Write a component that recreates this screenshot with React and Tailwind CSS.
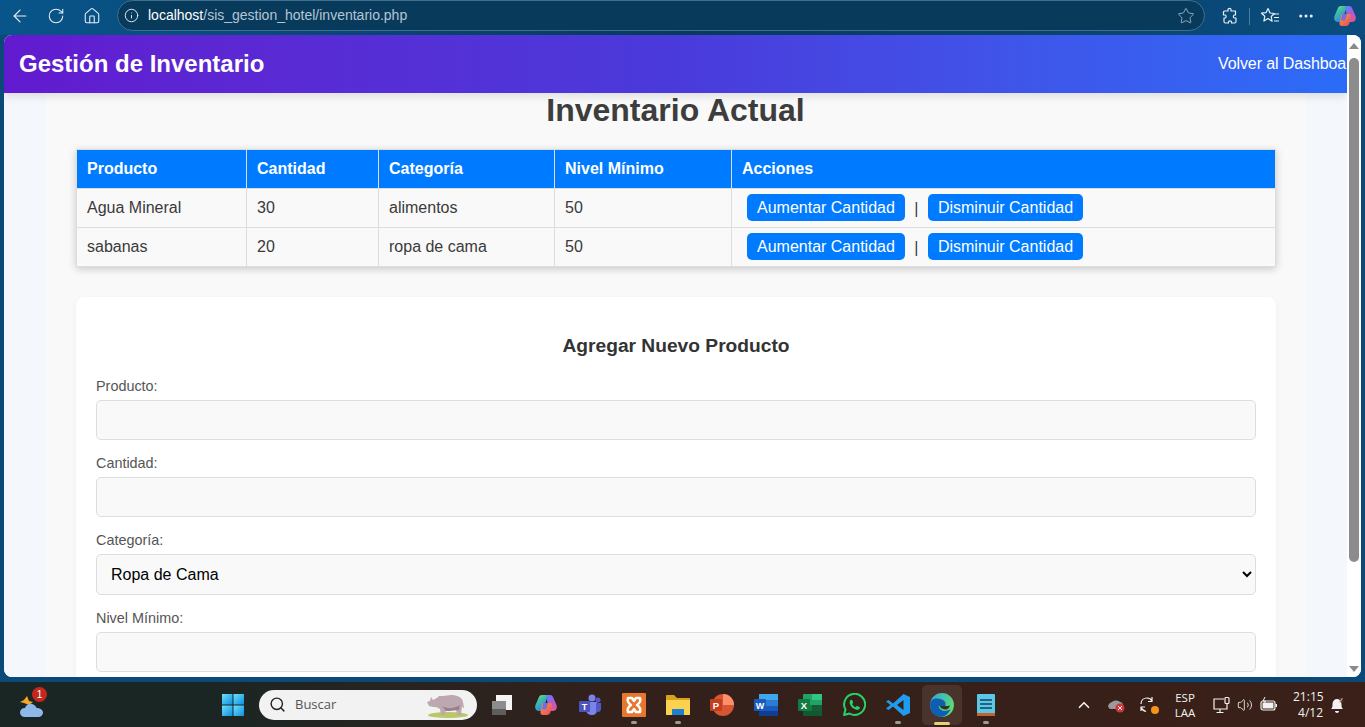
import { ArrowLeft, RotateCw, Home, Info, Star, MoreHorizontal, Search, ChevronUp, Volume2 } from "lucide-react";

const rows = [
  { producto: "Agua Mineral", cantidad: 30, categoria: "alimentos", minimo: 50 },
  { producto: "sabanas", cantidad: 20, categoria: "ropa de cama", minimo: 50 },
];

const thClass = "border border-[#ddd] px-[10px] text-left font-bold text-white h-[39px]";
const tdClass = "border border-[#ddd] px-[10px] h-[39px] text-[#3a3a3a]";
const btnClass = "bg-[#007bff] text-white rounded-[5px] px-[10px] h-[27px] leading-[27px] mx-[5px] inline-block relative top-[-1px]";
const labelClass = "block text-[14.4px] leading-[16px] text-[#555] mb-[6px]";
const inputClass = "block w-full h-[40px] bg-[#f9f9f9] border border-[#ddd] rounded-[5px] px-[10px]";

const CopilotIcon = ({ id = "a", size = 24 }) => (
  <svg width={size} height={size} viewBox="0 0 24 24">
    <defs>
      <linearGradient id={"cop1" + id} x1="0" y1="0" x2="0.6" y2="1">
        <stop offset="0" stopColor="#e8d84a" />
        <stop offset="0.35" stopColor="#3fc6a0" />
        <stop offset="1" stopColor="#2f7fe8" />
      </linearGradient>
      <linearGradient id={"cop2" + id} x1="0" y1="0" x2="0.6" y2="1">
        <stop offset="0" stopColor="#4a8ff0" />
        <stop offset="0.5" stopColor="#a85be0" />
        <stop offset="1" stopColor="#e0559a" />
      </linearGradient>
      <linearGradient id={"cop3" + id} x1="0" y1="0" x2="1" y2="1">
        <stop offset="0" stopColor="#f7a02f" />
        <stop offset="1" stopColor="#e8456a" />
      </linearGradient>
    </defs>
    <path d="M8 2h6L10 14l-1.500 4H5c-3 0-4.500-3-3.500-6L5 4c.5-1.200 1.500-2 3-2z" fill={"url(#cop1" + id + ")"} />
    <path d="M12 2h4c1.500 0 2.500.800 3 2l3.500 8c1 3-.5 6-3.500 6h-4z" fill={"url(#cop2" + id + ")"} />
    <path d="M9 10h7c2 0 2.500 2 2 3.500L16.500 19c-.5 1.800-1.800 3-3.500 3H9c-2 0-3-1.500-2.400-3.500l1.400-7c.2-1 .6-1.500 1-1.500z" fill={"url(#cop3" + id + ")"} />
    <path d="M9 10h5l-1.500 5c-.3 1-1 1.500-2 1.500H8z" fill="#7a6ae0" />
  </svg>
);

const TaskIcon = ({ children, running, active }) => (
  <div className={"relative w-[44px] h-[45px] flex items-center justify-center"}>
    {active && <div className="absolute left-[2px] top-[3px] w-[40px] h-[40px] rounded-[5px] bg-[#4a332b]" />}
    <div className="relative flex">{children}</div>
    {running && <div className="absolute bottom-[3px] left-[19px] w-[6px] h-[3px] rounded-full bg-[#9a9a9a]" />}
    {active && <div className="absolute bottom-[2px] left-[14px] w-[16px] h-[3px] rounded-full bg-[#e8cf7a]" />}
  </div>
);

const TopBar = () => (
  <div className="h-[35px] shrink-0 flex items-center bg-gradient-to-r from-[#08558a] via-[#083a5e] to-[#0a4d7e] text-white">
    <ArrowLeft className="ml-[10px] mb-[3px] text-[#e8f0f6]" size={20} strokeWidth={1.4} />
    <RotateCw className="ml-[17px] mb-[3px] text-[#e8f0f6]" size={18} strokeWidth={1.4} />
    <Home className="ml-[18px] mb-[3px] text-[#e8f0f6]" size={18} strokeWidth={1.4} />
    <div className="ml-[16px] flex-1 h-[31px] mb-[4px] flex items-center rounded-full border border-[#3f6f8f] bg-[#083a5c]">
      <Info className="ml-[6px] text-[#e8f0f6]" size={15} strokeWidth={1.5} />
      <span className="ml-[9px] text-[14px] text-white font-medium">localhost</span>
      <span className="text-[14px] text-[#b4c6d4]">/sis_gestion_hotel/inventario.php</span>
      <Star className="ml-auto mr-[9px] text-[#9db4c4]" size={18} strokeWidth={1.2} />
    </div>
    <svg className="ml-[16px] mb-[3px]" width="18" height="18" viewBox="0 0 18 18" fill="none" stroke="#e8f0f6" strokeWidth="1.200" strokeLinejoin="round">
      <path d="M7 2.500c0-1.500 3-1.500 3 0V4h4.500v4h-1c-1.500 0-1.500 3 0 3h1.500v3.500c0 1-.5 1.500-1.500 1.500h-3v-1c0-1.500-3-1.500-3 0v1H4.500C3.500 16 3 15.500 3 14.500V11h1c1.500 0 1.500-3 0-3H2.500V5c0-.5.500-1 1-1H7z" />
    </svg>
    <div className="ml-[10px] mb-[3px] w-px h-[17px] bg-[#4f7f9f]" />
    <svg className="ml-[10px] mb-[3px]" width="20" height="18" viewBox="0 0 20 18" fill="none" stroke="#e8f0f6" strokeWidth="1.200" strokeLinejoin="round">
      <path d="M8 1.500l2 4.500 4.500.5-3.300 3 .9 4.800L8 11.500 3.900 14l.9-4.800-3.300-3 4.500-.5z" />
      <path d="M14 7h5M14 10.500h5M14 14h5" />
    </svg>
    <MoreHorizontal className="ml-[17px] mb-[3px] text-[#e8f0f6]" size={18} strokeWidth={2} />
    <div className="ml-[18px] mr-[8px] mb-[3px] flex">
      <CopilotIcon id="top" />
    </div>
  </div>
);

const Page = () => (
  <div className="flex-1 min-w-0 h-full flex flex-col overflow-hidden">
    <header className="relative z-10 h-[58px] shrink-0 flex items-center justify-between whitespace-nowrap pl-[15px] bg-gradient-to-r from-[#621acf] via-[#4a3adb] to-[#2a6cf8] shadow-[0_4px_8px_rgba(0,0,0,0.1)]">
      <h1 className="text-[24px] font-bold text-white">Gestión de Inventario</h1>
      <a className="text-white mr-[-13px] w-[142px] overflow-hidden shrink-0 tracking-[-0.1px]">Volver al Dashboard</a>
    </header>
    <main className="flex-1 min-h-0 overflow-hidden bg-[#f4f7fc] px-[42px]">
      <div className="bg-[#f9f9f9] w-[1261px] px-[30px] h-full">
        <h2 className="text-[32px] leading-[34px] font-bold text-[#3d3d3d] text-center mb-[22px] pr-[2px]">Inventario Actual</h2>
        <table className="w-[1200px] table-fixed border-collapse shadow-[0_2px_8px_rgba(0,0,0,0.2)]">
          <colgroup>
            <col className="w-[170px]" />
            <col className="w-[132px]" />
            <col className="w-[176px]" />
            <col className="w-[177px]" />
            <col />
          </colgroup>
          <thead>
            <tr className="bg-[#007bff]">
              <th className={thClass}>Producto</th>
              <th className={thClass}>Cantidad</th>
              <th className={thClass}>Categoría</th>
              <th className={thClass}>Nivel Mínimo</th>
              <th className={thClass}>Acciones</th>
            </tr>
          </thead>
          <tbody>
            {rows.map((row) => (
              <tr key={row.producto}>
                <td className={tdClass}>{row.producto}</td>
                <td className={tdClass}>{row.cantidad}</td>
                <td className={tdClass}>{row.categoria}</td>
                <td className={tdClass}>{row.minimo}</td>
                <td className={tdClass}>
                  <a className={btnClass}>Aumentar Cantidad</a>
                  <span> | </span>
                  <a className={btnClass}>Disminuir Cantidad</a>
                </td>
              </tr>
            ))}
          </tbody>
        </table>
        <form className="mt-[30px] w-[1200px] bg-white rounded-[8px] px-[20px] pt-[37px] pb-[20px] shadow-[0_2px_6px_rgba(0,0,0,0.04)]">
          <h3 className="text-[19.2px] leading-[24px] font-bold text-[#333] text-center mb-[20px] pt-px mt-[-1px]">Agregar Nuevo Producto</h3>
          <label className={labelClass}>Producto:</label>
          <input type="text" className={inputClass + " mb-[15px]"} />
          <label className={labelClass}>Cantidad:</label>
          <input type="number" className={inputClass + " mb-[15px]"} />
          <label className={labelClass}>Categoría:</label>
          <select className="block w-full h-[41px] bg-[#f9f9f9] border border-[#ddd] rounded-[5px] px-[10px] text-black mb-[15px]">
            <option>Ropa de Cama</option>
            <option>Alimentos</option>
          </select>
          <label className={labelClass}>Nivel Mínimo:</label>
          <input type="number" className={inputClass} />
        </form>
      </div>
    </main>
  </div>
);

const Scrollbar = () => (
  <div className="w-[14px] h-full shrink-0 bg-white flex flex-col items-center pt-[8px] pb-[5px]">
    <div className="w-0 h-0 border-x-[5px] border-x-transparent border-b-[6px] border-b-[#8a8a8a]" />
    <div className="w-[10px] h-[504px] mt-[9px] rounded-full bg-[#8c8c8c]" />
    <div className="mt-auto w-0 h-0 border-x-[5px] border-x-transparent border-t-[6px] border-t-[#8a8a8a]" />
  </div>
);

const Taskbar = () => (
  <div className="h-[45px] shrink-0 flex items-center bg-gradient-to-r from-[#1a2624] from-15% via-[#33201b] via-45% to-[#3a2018] text-white">
    <div className="relative ml-[19px] w-[26px] h-[30px]">
      <svg width="26" height="30" viewBox="0 0 26 30">
        <path d="M8 6l2 5 4 1-4 3-5-2-4-1 4-2z" fill="#f5a623" />
        <path d="M6 27c-3 0-5-2-5-4.500S3 18 6 18c1-3 4-5 7-4 2 .5 4 2 4.500 4 3.500 0 6.500 2 6.500 4.500S22 27 19 27z" fill="#8fb8ea" />
      </svg>
      <div className="absolute top-[-3px] left-[13px] w-[15px] h-[15px] rounded-full bg-[#c4281c] text-[10px] leading-[15px] text-center text-white">1</div>
    </div>
    <div className="ml-[166px]">
      <TaskIcon>
        <svg width="24" height="24" viewBox="0 0 24 24">
          <defs>
            <linearGradient id="win" x1="0" y1="0" x2="1" y2="1">
              <stop offset="0" stopColor="#6fe0fb" />
              <stop offset="1" stopColor="#0a8fe0" />
            </linearGradient>
          </defs>
          <rect x="1" y="1" width="10.500" height="10.500" fill="url(#win)" />
          <rect x="12.500" y="1" width="10.500" height="10.500" fill="url(#win)" />
          <rect x="1" y="12.500" width="10.500" height="10.500" fill="url(#win)" />
          <rect x="12.500" y="12.500" width="10.500" height="10.500" fill="url(#win)" />
        </svg>
      </TaskIcon>
    </div>
    <div className="ml-[4px] w-[218px] h-[30px] rounded-full bg-[#f2f2f2] flex items-center pl-[10px] overflow-hidden">
      <Search className="text-[#222]" size={17} strokeWidth={2} />
      <span className="ml-[9px] text-[13px] text-[#555] font-['Open_Sans',sans-serif]">Buscar</span>
      <svg className="ml-auto mr-[9px]" width="42" height="26" viewBox="0 0 42 26">
        <ellipse cx="22" cy="23" rx="20" ry="3" fill="#b9c765" />
        <path d="M1 10l3-1 1-4 2 3 4-2 2-2 4 0 8-1c6 0 11 2 12 7l1 6-1 0-1-2-1 9h-4l-1-6-10 1-1 5h-4l-1-6-4-2-3 0-4-1z" fill="#bda8b0" />
        <path d="M16 14c5 3 12 3 18-1l-1 5-10 1-3 0z" fill="#96808c" />
      </svg>
    </div>
    <div className="ml-[3px] flex">
      <TaskIcon>
        <svg width="24" height="24" viewBox="0 0 24 24">
          <rect x="6" y="2" width="16" height="15" fill="#f4f4f4" />
          <rect x="2" y="8" width="14" height="14" fill="#8d8d8d" />
          <rect x="2" y="16" width="14" height="6" fill="#5e5e5e" />
        </svg>
      </TaskIcon>
      <TaskIcon>
        <CopilotIcon id="bar" />
      </TaskIcon>
      <TaskIcon>
        <svg width="24" height="24" viewBox="0 0 24 24">
          <circle cx="14" cy="5" r="3.500" fill="#7b83eb" />
          <circle cx="20" cy="7" r="2.500" fill="#5059c9" />
          <path d="M8 9h11v8c0 3-2 5-5 5s-6-2-6-5z" fill="#7b83eb" />
          <path d="M18 10h5v6c0 2-1.500 3-3 3h-2z" fill="#5059c9" />
          <rect x="1" y="8" width="11" height="11" rx="1" fill="#4b53bc" />
          <text x="6.500" y="16.500" textAnchor="middle" fontSize="9" fontWeight="700" fill="#fff" fontFamily="Liberation Sans">T</text>
        </svg>
      </TaskIcon>
      <TaskIcon running>
        <svg width="24" height="24" viewBox="0 0 24 24">
          <rect width="24" height="24" rx="1" fill="#e8762c" />
          <path d="M6 5h4l2 3 2-3h4c1 3 0 5-3 7 3 2 4 4 3 7h-4l-2-3-2 3H6c-1-3 0-5 3-7-3-2-4-4-3-7z" fill="none" stroke="#fff" strokeWidth="2.500" strokeLinejoin="round" />
        </svg>
      </TaskIcon>
      <TaskIcon running>
        <svg width="24" height="24" viewBox="0 0 24 24">
          <path d="M0 3c0-.6.4-1 1-1h7l3 3h12c.6 0 1 .4 1 1v3H0z" fill="#d9a21b" />
          <path d="M0 7h24v14c0 .6-.4 1-1 1H1c-.6 0-1-.4-1-1z" fill="#fbd24f" />
          <path d="M6 17c0-.6.4-1 1-1h10c.6 0 1 .4 1 1v5H6z" fill="#1c7fcf" />
        </svg>
      </TaskIcon>
      <TaskIcon>
        <svg width="24" height="24" viewBox="0 0 24 24">
          <circle cx="13" cy="12" r="11" fill="#d65532" />
          <path d="M13 1a11 11 0 0 1 11 11H13z" fill="#ff8f6b" />
          <rect x="0" y="6" width="12" height="12" rx="1" fill="#c43e1c" />
          <text x="6" y="15.500" textAnchor="middle" fontSize="9.500" fontWeight="700" fill="#fff" fontFamily="Liberation Sans">P</text>
        </svg>
      </TaskIcon>
      <TaskIcon>
        <svg width="24" height="24" viewBox="0 0 24 24">
          <rect x="5" y="1" width="19" height="22" rx="1" fill="#2b7cd3" />
          <rect x="5" y="1" width="19" height="6" fill="#41a5ee" />
          <rect x="5" y="13" width="19" height="5" fill="#185abd" />
          <rect x="5" y="18" width="19" height="5" fill="#103f91" />
          <rect x="0" y="6" width="12" height="12" rx="1" fill="#185abd" />
          <text x="6" y="15.500" textAnchor="middle" fontSize="9" fontWeight="700" fill="#fff" fontFamily="Liberation Sans">W</text>
        </svg>
      </TaskIcon>
      <TaskIcon>
        <svg width="24" height="24" viewBox="0 0 24 24">
          <rect x="5" y="1" width="19" height="22" rx="1" fill="#21a366" />
          <rect x="14" y="1" width="10" height="6" fill="#33c481" />
          <rect x="5" y="12" width="9" height="6" fill="#107c41" />
          <rect x="14" y="12" width="10" height="6" fill="#185c37" />
          <rect x="5" y="18" width="19" height="5" fill="#0f5a30" />
          <rect x="0" y="6" width="12" height="12" rx="1" fill="#107c41" />
          <text x="6" y="15.500" textAnchor="middle" fontSize="9.500" fontWeight="700" fill="#fff" fontFamily="Liberation Sans">X</text>
        </svg>
      </TaskIcon>
      <TaskIcon>
        <svg width="24" height="24" viewBox="0 0 24 24">
          <path d="M2 22l1.500-5.500A10.500 10.500 0 1 1 7.500 20.500z" fill="none" stroke="#25d366" strokeWidth="2" strokeLinejoin="round" />
          <path d="M8.500 7c.5-.5 1.500-.5 1.800.2l.8 2c.1.4 0 .7-.3 1l-.7.8c.8 1.500 2 2.600 3.500 3.300l.9-1c.3-.3.6-.3 1-.2l1.900.9c.6.3.7 1 .3 1.600-.7 1-2 1.500-3.200 1.200-3.500-.8-6-3.300-6.800-6.500-.2-1.200.1-2.400.8-3.300z" fill="#25d366" />
        </svg>
      </TaskIcon>
      <TaskIcon running>
        <svg width="24" height="24" viewBox="0 0 24 24">
          <path d="M17.500 1L24 4v16l-6.500 3L7 13.500 2.500 17 0 15.500 4.500 12 0 8.500 2.500 7 7 10.500zM17.500 7L11 12l6.500 5z" fill="#1f9cf0" />
        </svg>
      </TaskIcon>
      <TaskIcon active>
        <svg width="26" height="26" viewBox="0 0 24 24">
          <defs>
            <linearGradient id="edge" x1="0" y1="0" x2="1" y2="0.600">
              <stop offset="0" stopColor="#2fa5dc" />
              <stop offset="1" stopColor="#5fdc72" />
            </linearGradient>
          </defs>
          <circle cx="12" cy="12" r="11" fill="url(#edge)" />
          <path d="M1 12C1 6 7 5 12 7c3 1 4 4 3 6H9c0 4 5 6 11 3-2 4-5 7-9 7-6 0-10-5-10-11z" fill="#0f5fb0" />
          <path d="M10 13h7c1.500 0 2-1 2-1 .5 3-3 5-5 4-2-.5-4-1.500-4-3z" fill="#3a3028" />
        </svg>
      </TaskIcon>
      <TaskIcon running>
        <svg width="24" height="24" viewBox="0 0 24 24">
          <rect x="3" y="1" width="18" height="22" rx="1" fill="#5cc8e8" />
          <rect x="3" y="20" width="18" height="3" fill="#c4622d" />
          <path d="M6 7h12M6 11h12M6 15h12" stroke="#12425e" strokeWidth="1.500" />
        </svg>
      </TaskIcon>
    </div>
    <div className="ml-auto flex items-center mr-[20px] text-[#f2f2f2]">
      <ChevronUp size={18} strokeWidth={2.2} />
      <div className="relative ml-[14px] w-[20px] h-[16px]">
        <svg width="20" height="16" viewBox="0 0 20 16">
          <path d="M2 11c-2-2 0-5 3-6 2-2 6-2 8 0 2 0 3 2 3 3l-4 4H3z" fill="#9a9a9a" />
          <circle cx="13" cy="11" r="4.500" fill="#d13438" />
          <path d="M11 9l4 4M15 9l-4 4" stroke="#fff" strokeWidth="1" />
        </svg>
      </div>
      <div className="relative ml-[12px] w-[18px] h-[20px]">
        <svg width="18" height="20" viewBox="0 0 18 20" fill="none" stroke="#f2f2f2" strokeWidth="1.200">
          <path d="M2 9c0-4 3-6 6-6 2 0 4 1 5 3M13 2v4.500H9" />
          <path d="M2 16v-4h4M2 12c1 3 3 4 5 4.500" />
        </svg>
        <div className="absolute right-[-2px] bottom-[1px] w-[8px] h-[8px] rounded-full bg-[#f7931a]" />
      </div>
      <div className="ml-[15px] w-[26px] text-center text-[11.500px] leading-[15px] font-['Open_Sans',sans-serif]">
        <div>ESP</div>
        <div>LAA</div>
      </div>
      <svg className="ml-[15px]" width="18" height="18" viewBox="0 0 18 18" fill="none" stroke="#f2f2f2" strokeWidth="1.200">
        <path d="M11 3H1v10h13v-3M7 13v3M3.500 16.500h7" />
        <rect x="12" y="1.500" width="4" height="6" rx="1" />
        <path d="M14 7.500v2.500" />
      </svg>
      <Volume2 className="ml-[6px]" size={16} strokeWidth={1.3} />
      <svg className="ml-[7px]" width="18" height="16" viewBox="0 0 18 16">
        <rect x="1" y="4" width="14" height="9" rx="2" fill="none" stroke="#f2f2f2" strokeWidth="1.200" />
        <rect x="2.500" y="5.500" width="11" height="6" fill="#f2f2f2" />
        <rect x="15.500" y="7" width="1.500" height="3" fill="#f2f2f2" />
        <path d="M5 0L3 4h2.500L4 7" stroke="#f2f2f2" strokeWidth="1" fill="none" />
      </svg>
      <div className="ml-[15px] mt-[1px] w-[30px] text-right text-[12px] leading-[16px] font-['Open_Sans',sans-serif]">
        <div>21:15</div>
        <div>4/12</div>
      </div>
      <svg className="ml-[6px]" width="16" height="18" viewBox="0 0 16 18">
        <path d="M2 13c1.500-1 1.500-3 1.500-5 0-3 2-5 4.500-5s4.500 2 4.500 5c0 2 0 4 1.500 5z" fill="#f2f2f2" />
        <path d="M6 15h4c0 1-1 2-2 2s-2-1-2-2z" fill="#f2f2f2" />
        <text x="10.500" y="6" fontSize="7" fontWeight="700" fill="#f2f2f2" stroke="#33201b" strokeWidth="0.300" fontFamily="Liberation Sans">z</text>
      </svg>
    </div>
  </div>
);

export default function App() {
  return (
    <div className="w-[1365px] h-[727px] flex flex-col overflow-hidden font-['Liberation_Sans',Arial,sans-serif] text-[16px]">
      <TopBar />
      <div className="flex-1 min-h-0 bg-[#0b4a78] pl-[4px] pr-[4px] pb-[5px]">
        <div className="h-full flex rounded-t-[8px] rounded-b-[8px] overflow-hidden bg-white">
          <Page />
          <Scrollbar />
        </div>
      </div>
      <Taskbar />
    </div>
  );
}
